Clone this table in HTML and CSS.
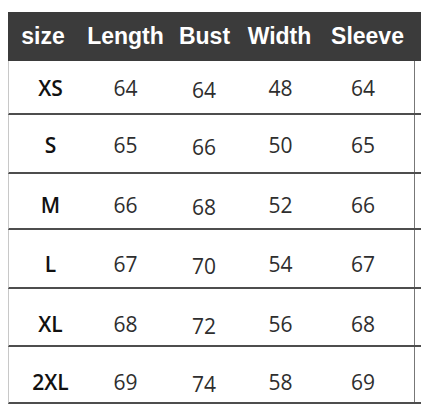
FILE: index.html
```html
<!DOCTYPE html>
<html>
<head>
<meta charset="utf-8">
<link rel="stylesheet" href="styles.css">
</head>
<body>
<div class="chart">
  <div class="head">
    <div class="h h-size">size</div>
    <div class="h h-len">Length</div>
    <div class="h h-bust">Bust</div>
    <div class="h h-wid">Width</div>
    <div class="h h-slv">Sleeve</div>
  </div>
  <div class="row r1"><div class="c c-size">XS</div><div class="c c-len">64</div><div class="c c-bust">64</div><div class="c c-wid">48</div><div class="c c-slv">64</div></div>
  <div class="row r2"><div class="c c-size">S</div><div class="c c-len">65</div><div class="c c-bust">66</div><div class="c c-wid">50</div><div class="c c-slv">65</div></div>
  <div class="row r3"><div class="c c-size">M</div><div class="c c-len">66</div><div class="c c-bust">68</div><div class="c c-wid">52</div><div class="c c-slv">66</div></div>
  <div class="row r4"><div class="c c-size">L</div><div class="c c-len">67</div><div class="c c-bust">70</div><div class="c c-wid">54</div><div class="c c-slv">67</div></div>
  <div class="row r5"><div class="c c-size">XL</div><div class="c c-len">68</div><div class="c c-bust">72</div><div class="c c-wid">56</div><div class="c c-slv">68</div></div>
  <div class="row r6"><div class="c c-size">2XL</div><div class="c c-len">69</div><div class="c c-bust">74</div><div class="c c-wid">58</div><div class="c c-slv">69</div></div>
</div>
</body>
</html>
```
FILE: styles.css
```css
html, body {
  margin: 0;
  padding: 0;
  background: #fff;
  overflow: hidden;
}
.chart {
  margin: 12px 0 0 8px;
  width: 413px;
}
.head {
  display: flex;
  height: 49px;
  background: #3b3b3b;
  color: #fff;
  font-family: "Liberation Sans", Arial, sans-serif;
  font-weight: bold;
  font-size: 23px;
  line-height: 49px;
}
.h { text-align: center; white-space: nowrap; }
.h-size { width: 70px; }
.h-len { width: 95px; }
.h-bust { width: 63px; }
.h-wid { width: 87px; }
.h-slv { width: 89px; }

.row {
  display: flex;
  border-left: 1px solid #c8c8c8;
  border-bottom: 2px solid #4d4d4d;
  font-family: "Open Sans", "Noto Sans", sans-serif;
  font-size: 21px;
  line-height: 21px;
  color: #2e2e2e;
}
.c {
  text-align: center;
  box-sizing: border-box;
}
.c-size { width: 83px; font-weight: 600; color: #111; }
.c-len { width: 67px; }
.c-bust { width: 90px; }
.c-wid { width: 63px; }
.c-slv { width: 103px; border-right: 1px solid #777; }

.r1 { height: 52px; }
.r2 { height: 57px; }
.r3 { height: 54px; }
.r4 { height: 57px; }
.r5 { height: 56px; }
.r6 { height: 55px; }

.r1 .c { padding-top: 17px; }
.r2 .c { padding-top: 20px; }
.r3 .c { padding-top: 21px; }
.r4 .c { padding-top: 24px; }
.r5 .c { padding-top: 25px; }
.r6 .c { padding-top: 25px; }
.r1 .c-bust { padding-top: 19px; }
.r2 .c-bust { padding-top: 22px; }
.r3 .c-bust { padding-top: 23px; }
.r4 .c-bust { padding-top: 26px; }
.r5 .c-bust { padding-top: 27px; }
.r6 .c-bust { padding-top: 27px; }
```
